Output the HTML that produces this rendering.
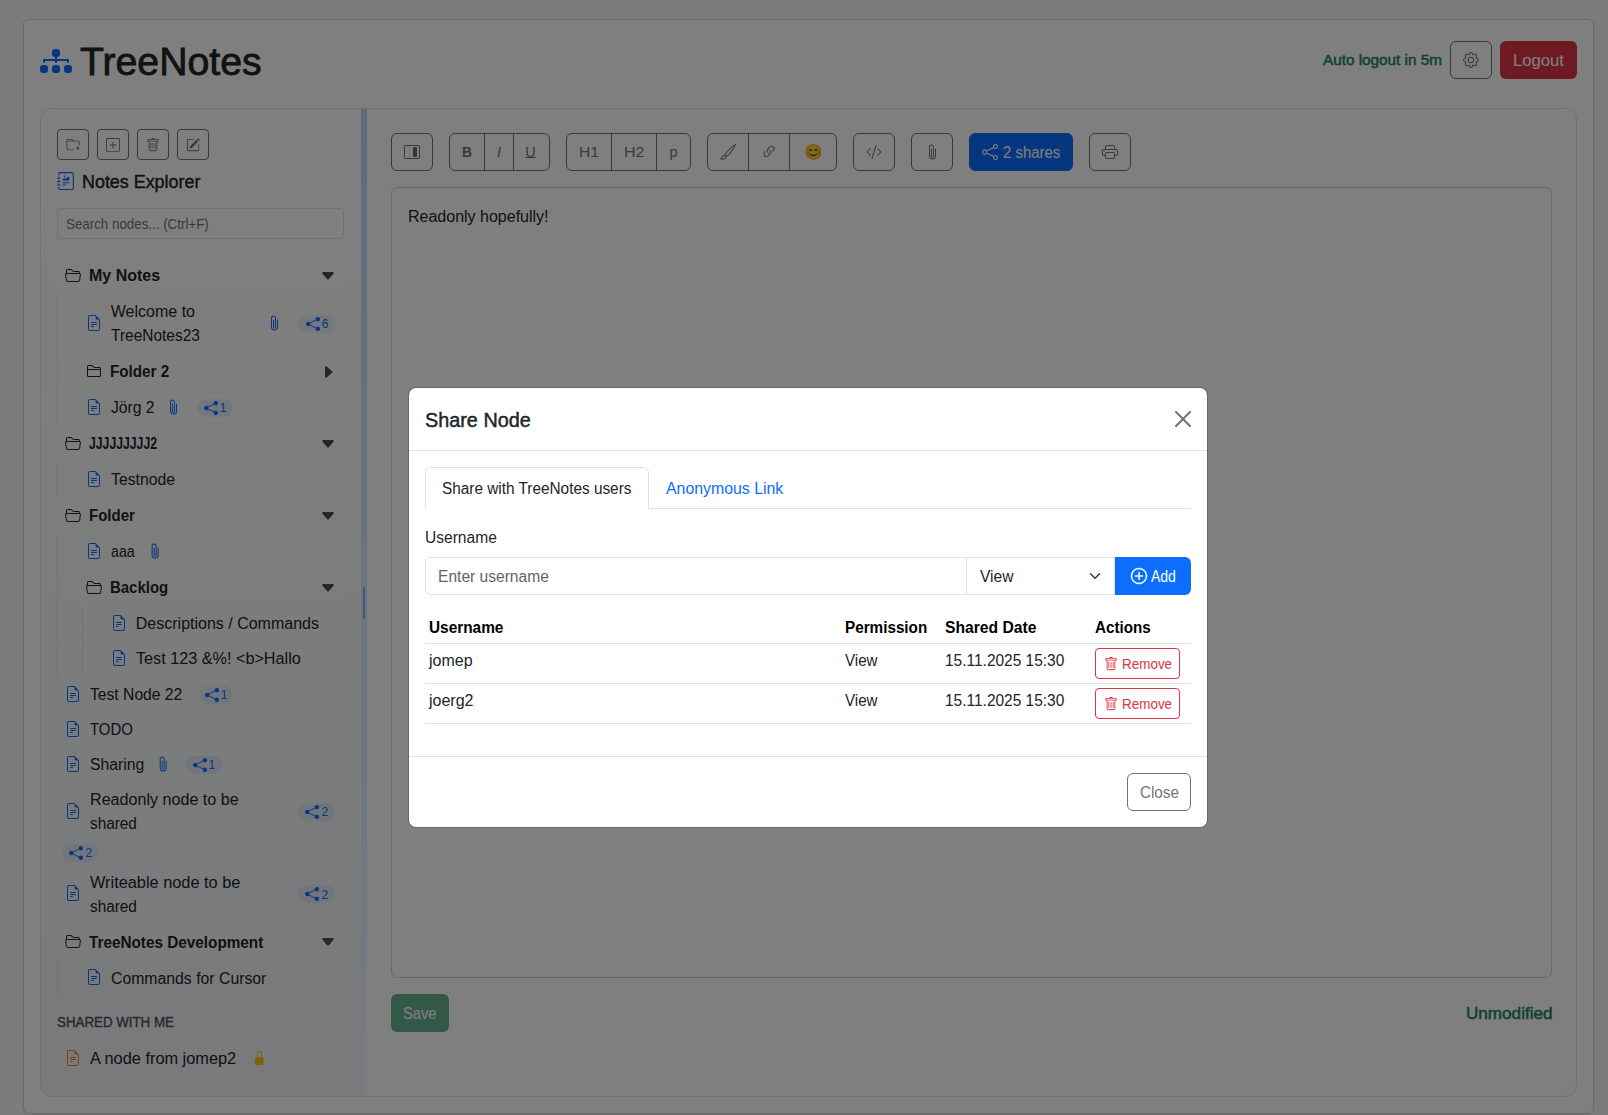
<!DOCTYPE html>
<html lang="en"><head><meta charset="utf-8"><title>TreeNotes</title>
<style>
*{box-sizing:border-box}
html,body{margin:0;padding:0}
body{width:1608px;height:1115px;overflow:hidden;background:#f8f9fa;font-family:"Liberation Sans",sans-serif;font-size:16px;line-height:1.5;color:#212529;position:relative}
span[id^=t]{position:relative;top:.0675em}
svg.bi{display:inline-block;vertical-align:-.125em;flex:none}
.app{position:absolute;left:23px;top:19px;width:1571px;height:1095px;background:#fff;border:1px solid #d3d4d5;border-radius:6px;box-shadow:0 1px 3px rgba(0,0,0,.08)}
.hdr{position:absolute;left:16px;top:16px;right:16px;height:48px}
.logo{position:absolute;left:0;top:9px;width:32px;height:32px;line-height:0}
.hdr h1{position:absolute;left:40px;top:-.5px;margin:0;font-size:39px;line-height:48px;font-weight:400;color:#212529;white-space:nowrap;-webkit-text-stroke:.8px #212529}
.auto{position:absolute;right:135px;top:11.3px;font-size:14px;line-height:24px;font-weight:400;color:#198754;white-space:nowrap;-webkit-text-stroke:.45px #198754}
.gear{position:absolute;left:1410px;top:5px;width:42px;height:38px;border:1px solid #6c757d;border-radius:6px;color:#6c757d;display:flex;align-items:center;justify-content:center}
.logout{position:absolute;left:1460px;top:5px;width:77px;height:38px;background:#dc3545;border-radius:6px;color:#fff;display:flex;align-items:center;justify-content:center;white-space:nowrap}
.card{position:absolute;left:16px;top:88px;width:1537px;height:989px;border:1px solid #dee2e6;border-radius:12px;overflow:hidden;background:#fff}
.side{position:absolute;left:0;top:0;width:320px;height:100%;background:linear-gradient(180deg,#fff 0%,#f2f4f6 100%);padding:20px 16px 0 16px}
.sbtns{display:flex;gap:8px;height:31px}
.sbtns span{width:32px;height:31px;border:1px solid #6c757d;border-radius:4px;color:#6c757d;display:flex;align-items:center;justify-content:center}
.ne{position:absolute;left:16px;top:59px;height:26px;display:flex;align-items:center;white-space:nowrap}
.ne h5{margin:0 0 0 7.3px;font-size:17.6px;font-weight:400;line-height:26px;color:#212529;-webkit-text-stroke:.4px #212529}
.search{position:absolute;left:16px;top:99px;width:287px;height:31px;border:1px solid #dee2e6;border-radius:4px;background:#fff;font-size:14px;line-height:29px;padding:0 8px 0 7.5px;color:#6c757d;white-space:nowrap}
.tree{position:absolute;left:16px;top:148px;width:287px}
.row{display:flex;align-items:center;min-height:35px;padding:5.5px 8px;position:relative;white-space:nowrap;color:#212529}
.row>svg.bi{position:relative;top:-1px}
.row .nm{margin-left:8.8px;line-height:24px;position:relative;top:-.5px}
.row.folder .nm{font-weight:700;margin-left:8px}
.row.folder{color:#212529;background:linear-gradient(180deg,rgba(255,255,255,0),rgba(255,255,255,.3) 35%,rgba(255,255,255,.3) 65%,rgba(255,255,255,0));min-height:37px;padding-top:6.5px;padding-bottom:6.5px}
.row.d1{padding-left:29px}
.row.d2{padding-left:54px}
.caret{position:absolute;right:8px;top:10.5px;line-height:0;color:#495057}
.kids{position:relative}
.kids:before{content:"";position:absolute;left:0;top:0;bottom:0;width:1px;background:#dee2e6}
.kids.k2:before{left:25px}
.kids.k2{margin-bottom:1px}
.clip{position:absolute;top:50%;margin-top:-8.5px;color:#0d6efd;line-height:0}
.sbadge{position:absolute;top:50%;margin-top:-9px;display:inline-flex;align-items:center;justify-content:center;height:18px;border-radius:9px;background:rgba(13,110,253,.08);color:#0d6efd;font-size:12px;line-height:18px}
.sbadge span{margin-left:2px}
.lonely{height:23.5px;position:relative}
.swm{font-size:14px;line-height:21px;font-weight:400;color:#495057;margin-top:16px;height:29.5px;white-space:nowrap;-webkit-text-stroke:.35px #495057}
.lock{position:absolute;top:50%;margin-top:-7.5px;line-height:0}
.split{position:absolute;left:320px;top:0;width:6px;height:100%;background:linear-gradient(180deg,rgba(13,110,253,.28),rgba(13,110,253,.05))}
.split i{position:absolute;left:2px;top:478px;width:2px;height:32px;background:rgba(13,110,253,.45);border-radius:1px}
.main{position:absolute;left:326px;top:0;right:0;height:100%}
.toolbar{position:absolute;left:24px;top:24px;height:38px;width:800px}
.grp{position:absolute;top:0;height:38px;border:1px solid #6c757d;border-radius:6px;display:flex;color:#6c757d;overflow:hidden}
.tbtn{flex:1 1 auto;display:flex;align-items:center;justify-content:center;border-left:1px solid #6c757d;height:100%;white-space:nowrap}
.tbtn:first-child{border-left:0}
.tbtn.w36{flex:0 0 34px}.tbtn.w29{flex:0 0 29px}
.tbtn.w46{flex:0 0 44px}.tbtn.w45{flex:0 0 45px}.tbtn.w34{flex:1}
.tbtn.w42{flex:0 0 40px}.tbtn.w41{flex:0 0 41px}.tbtn.w47{flex:1}
.tbtn.sm{font-size:14.5px}
.grp.prim{background:#0d6efd;border-color:#0d6efd;color:#fff}
.emo{font-size:15px;color:#fd7e14}
.editor{position:absolute;left:24px;top:78px;width:1161px;height:791px;border:1px solid #ced4da;border-radius:6px;padding:16px}
.editor p{margin:0;white-space:nowrap}
.save{position:absolute;left:24px;top:885px;width:58px;height:38px;background:#198754;border-radius:6px;color:#fff;display:flex;align-items:center;justify-content:center;opacity:.65}
.unmod{position:absolute;right:24px;top:892px;font-weight:400;color:#198754;white-space:nowrap;-webkit-text-stroke:.5px #198754}
.backdrop{position:absolute;left:0;top:0;width:1608px;height:1115px;background:rgba(0,0,0,.5)}
.modal{position:absolute;left:408px;top:387px;width:800px;height:441px;background:#fff;background-clip:padding-box;border:1px solid rgba(0,0,0,.175);border-radius:8px;color:#212529}
.mh{height:63px;border-bottom:1px solid #dee2e6;position:relative}
.mh h5{position:absolute;left:16px;top:16px;margin:0;font-size:20px;line-height:30px;font-weight:400;white-space:nowrap;-webkit-text-stroke:.45px #212529}
.close{position:absolute;right:16px;top:23px;width:16px;height:16px;line-height:0;opacity:.55}
.mb{padding:16px;position:relative;height:305px}
.tabs{height:42px;border-bottom:1px solid #dee2e6;display:flex;white-space:nowrap}
.tab{height:42px;padding:8px 16px;border:1px solid transparent;border-radius:6px 6px 0 0;color:#0d6efd;line-height:24px}
.tab.act{width:224px;color:#212529;border-color:#dee2e6 #dee2e6 #fff;background:#fff}
label{display:block;margin-top:16px;margin-bottom:8px;line-height:24px;white-space:nowrap}
.ig{display:flex;height:38px;white-space:nowrap}
.inp{flex:0 0 542px;border:1px solid #dee2e6;border-radius:6px 0 0 6px;padding:6px 12px;color:#5f6368;line-height:24px}
.sel{flex:0 0 148px;border:1px solid #dee2e6;border-left:0;padding:6px 12px 6px 12.7px;line-height:24px;position:relative}
.add{flex:0 0 76px;background:#0d6efd;color:#fff;border-radius:0 6px 6px 0;display:flex;align-items:center;justify-content:center}
table{border-collapse:separate;border-spacing:0;margin-top:16px;width:766px;table-layout:fixed}
th,td{padding:4px;text-align:left;vertical-align:top;border-bottom:1px solid #dee2e6;line-height:24px;white-space:nowrap}
th{font-weight:700;color:#000}
td{height:40px}
th{height:33px}
.rm{display:inline-flex;align-items:center;height:31px;width:84.5px;padding:0 8px;border:1px solid #dc3545;border-radius:4px;color:#dc3545;font-size:14px}
.mf{position:absolute;left:0;bottom:0;width:100%;height:71px;border-top:1px solid #dee2e6}
.closeb{position:absolute;right:16px;top:16px;width:64px;height:38px;border:1px solid #6c757d;border-radius:6px;color:#6c757d;display:flex;align-items:center;justify-content:center}

</style></head><body>
<div class="app">
  <div class="hdr">
    <span class="logo"><svg class="bi" width="32" height="32" viewBox="0 0 16 16" fill="#0d6efd" style="overflow:visible;"><path fill-rule="evenodd" d="M6 3.5A1.5 1.5 0 0 1 7.5 2h1A1.5 1.5 0 0 1 10 3.5v1A1.5 1.5 0 0 1 8.5 6v1H14a.5.5 0 0 1 .5.5v1a.5.5 0 0 1-1 0V8h-5v.5a.5.5 0 0 1-1 0V8h-5v.5a.5.5 0 0 1-1 0v-1A.5.5 0 0 1 2 7h5.5V6A1.5 1.5 0 0 1 6 4.5zm-6 8A1.5 1.5 0 0 1 1.5 10h1A1.5 1.5 0 0 1 4 11.5v1A1.5 1.5 0 0 1 2.5 14h-1A1.5 1.5 0 0 1 0 12.5zm6 0A1.5 1.5 0 0 1 7.5 10h1a1.5 1.5 0 0 1 1.5 1.5v1A1.5 1.5 0 0 1 8.5 14h-1A1.5 1.5 0 0 1 6 12.5zm6 0a1.5 1.5 0 0 1 1.5-1.5h1a1.5 1.5 0 0 1 1.5 1.5v1a1.5 1.5 0 0 1-1.5 1.5h-1a1.5 1.5 0 0 1-1.5-1.5z"/></svg></span><h1><span id="t38" style="display:inline-block;transform:scaleX(1.0056);transform-origin:0 50%;margin-right:1.00px;">TreeNotes</span></h1>
    <span class="auto"><span id="t39" style="display:inline-block;transform:scaleX(1.0917);transform-origin:0 50%;margin-right:10.00px;">Auto logout in 5m</span></span>
    <span class="gear"><svg class="bi" width="16" height="16" viewBox="0 0 16 16" fill="currentColor" style="overflow:visible;"><path d="M8 4.754a3.246 3.246 0 1 0 0 6.492 3.246 3.246 0 0 0 0-6.492M5.754 8a2.246 2.246 0 1 1 4.492 0 2.246 2.246 0 0 1-4.492 0"/><path d="M9.796 1.343c-.527-1.790-3.065-1.790-3.592 0l-.094.319a.873.873 0 0 1-1.255.520l-.292-.160c-1.640-.892-3.433.902-2.540 2.541l.159.292a.873.873 0 0 1-.520 1.255l-.319.094c-1.790.527-1.790 3.065 0 3.592l.319.094a.873.873 0 0 1 .520 1.255l-.160.292c-.892 1.640.901 3.434 2.541 2.540l.292-.159a.873.873 0 0 1 1.255.520l.094.319c.527 1.790 3.065 1.790 3.592 0l.094-.319a.873.873 0 0 1 1.255-.520l.292.160c1.640.893 3.434-.902 2.540-2.541l-.159-.292a.873.873 0 0 1 .520-1.255l.319-.094c1.790-.527 1.790-3.065 0-3.592l-.319-.094a.873.873 0 0 1-.520-1.255l.160-.292c.893-1.640-.902-3.433-2.541-2.540l-.292.159a.873.873 0 0 1-1.255-.520zm-2.633.283c.246-.835 1.428-.835 1.674 0l.094.319a1.873 1.873 0 0 0 2.693 1.115l.291-.160c.764-.415 1.600.420 1.184 1.185l-.159.292a1.873 1.873 0 0 0 1.116 2.692l.318.094c.835.246.835 1.428 0 1.674l-.319.094a1.873 1.873 0 0 0-1.115 2.693l.160.291c.415.764-.420 1.600-1.185 1.184l-.291-.159a1.873 1.873 0 0 0-2.693 1.116l-.094.318c-.246.835-1.428.835-1.674 0l-.094-.319a1.873 1.873 0 0 0-2.692-1.115l-.292.160c-.764.415-1.600-.420-1.184-1.185l.159-.291A1.873 1.873 0 0 0 1.945 8.930l-.319-.094c-.835-.246-.835-1.428 0-1.674l.319-.094A1.873 1.873 0 0 0 3.060 4.377l-.160-.292c-.415-.764.420-1.600 1.185-1.184l.292.159a1.873 1.873 0 0 0 2.692-1.115z"/></svg></span>
    <span class="logout"><span id="t40" style="display:inline-block;transform:scaleX(1.0417);transform-origin:0 50%;margin-right:2.04px;">Logout</span></span>
  </div>
  <div class="card">
    <div class="side">
      <div class="sbtns"><span><svg class="bi" width="14" height="14" viewBox="0 0 16 16" fill="currentColor" style="overflow:visible;"><path d="m.5 3 .04.87a2 2 0 0 0-.342 1.311l.637 7A2 2 0 0 0 2.826 14H9v-1H2.826a1 1 0 0 1-.995-.91l-.637-7A1 1 0 0 1 2.19 4h11.62a1 1 0 0 1 .996 1.09L14.54 8h1.005l.256-2.819A2 2 0 0 0 13.81 3H9.828a2 2 0 0 1-1.414-.586l-.828-.828A2 2 0 0 0 6.172 1H2.5a2 2 0 0 0-2 2m5.672-1a1 1 0 0 1 .707.293L7.586 3H2.19q-.362.002-.683.12L1.5 2.98a1 1 0 0 1 1-.98z"/><path d="M13.5 9a.5.5 0 0 1 .5.5V11h1.5a.5.5 0 1 1 0 1H14v1.5a.5.5 0 1 1-1 0V12h-1.5a.5.5 0 0 1 0-1H13V9.5a.5.5 0 0 1 .5-.5"/></svg></span><span><svg class="bi" width="14" height="14" viewBox="0 0 16 16" fill="currentColor" style="overflow:visible;"><path d="M14 1a1 1 0 0 1 1 1v12a1 1 0 0 1-1 1H2a1 1 0 0 1-1-1V2a1 1 0 0 1 1-1zM2 0a2 2 0 0 0-2 2v12a2 2 0 0 0 2 2h12a2 2 0 0 0 2-2V2a2 2 0 0 0-2-2z"/><path d="M8 4a.5.5 0 0 1 .5.5v3h3a.5.5 0 0 1 0 1h-3v3a.5.5 0 0 1-1 0v-3h-3a.5.5 0 0 1 0-1h3v-3A.5.5 0 0 1 8 4"/></svg></span><span><svg class="bi" width="14" height="14" viewBox="0 0 16 16" fill="currentColor" style="overflow:visible;"><path d="M5.5 5.5A.5.5 0 0 1 6 6v6a.5.5 0 0 1-1 0V6a.5.5 0 0 1 .5-.5m2.5 0a.5.5 0 0 1 .5.5v6a.5.5 0 0 1-1 0V6a.5.5 0 0 1 .5-.5m3 .5a.5.5 0 0 0-1 0v6a.5.5 0 0 0 1 0z"/><path d="M14.5 3a1 1 0 0 1-1 1H13v9a2 2 0 0 1-2 2H5a2 2 0 0 1-2-2V4h-.5a1 1 0 0 1-1-1V2a1 1 0 0 1 1-1H6a1 1 0 0 1 1-1h2a1 1 0 0 1 1 1h3.5a1 1 0 0 1 1 1zM4.118 4 4 4.059V13a1 1 0 0 0 1 1h6a1 1 0 0 0 1-1V4.059L11.882 4zM2.5 3h11V2h-11z"/></svg></span><span><svg class="bi" width="14" height="14" viewBox="0 0 16 16" fill="currentColor" style="overflow:visible;"><path d="M15.502 1.94a.5.5 0 0 1 0 .706L14.459 3.69l-2-2L13.502.646a.5.5 0 0 1 .707 0l1.293 1.293zm-1.75 2.456-2-2L4.939 9.21a.5.5 0 0 0-.121.196l-.805 2.414a.25.25 0 0 0 .316.316l2.414-.805a.5.5 0 0 0 .196-.12l6.813-6.814z"/><path fill-rule="evenodd" d="M1 13.5A1.5 1.5 0 0 0 2.5 15h11a1.5 1.5 0 0 0 1.5-1.5v-6a.5.5 0 0 0-1 0v6a.5.5 0 0 1-.5.5h-11a.5.5 0 0 1-.5-.5v-11a.5.5 0 0 1 .5-.5H9a.5.5 0 0 0 0-1H2.5A1.5 1.5 0 0 0 1 2.5z"/></svg></span></div>
      <div class="ne"><svg class="bi" width="18" height="18" viewBox="0 0 16 16" fill="#0d6efd" style="overflow:visible;"><path d="M7.5 3.75a.75.75 0 1 1-1.5 0 .75.75 0 0 1 1.500 0m-.861 1.542 1.33.886 1.854-1.855a.25.25 0 0 1 .289-.047L11 4.75V7a.5.5 0 0 1-.5.5h-5A.5.5 0 0 1 5 7v-.5s1.54-1.274 1.639-1.208M5 9.5a.5.5 0 0 1 .5-.5h5a.5.5 0 0 1 0 1h-5a.5.5 0 0 1-.5-.5m0 2a.5.5 0 0 1 .5-.5h2a.5.5 0 0 1 0 1h-2a.5.5 0 0 1-.5-.5"/><path d="M3 0h10a2 2 0 0 1 2 2v12a2 2 0 0 1-2 2H3a2 2 0 0 1-2-2v-1h1v1a1 1 0 0 0 1 1h10a1 1 0 0 0 1-1V2a1 1 0 0 0-1-1H3a1 1 0 0 0-1 1v1H1V2a2 2 0 0 1 2-2"/><path d="M1 5v-.5a.5.5 0 0 1 1 0V5h.5a.5.5 0 0 1 0 1h-2a.5.5 0 0 1 0-1zm0 3v-.5a.5.5 0 0 1 1 0V8h.5a.5.5 0 0 1 0 1h-2a.5.5 0 0 1 0-1zm0 3v-.5a.5.5 0 0 1 1 0v.5h.5a.5.5 0 0 1 0 1h-2a.5.5 0 0 1 0-1z"/></svg><h5><span id="t41" style="display:inline-block;transform:scaleX(1.0172);transform-origin:0 50%;margin-right:2.01px;">Notes Explorer</span></h5></div>
      <div class="search"><span id="t42" style="display:inline-block;transform:scaleX(0.9530);transform-origin:0 50%;margin-right:-7.04px;">Search nodes... (Ctrl+F)</span></div>
      <div class="tree">
<div class="row folder d0"><svg class="bi" width="16" height="16" viewBox="0 0 16 16" fill="currentColor" style="overflow:visible;"><path d="M1 3.5A1.5 1.5 0 0 1 2.5 2h2.764c.958 0 1.76.56 2.311 1.184C7.985 3.648 8.48 4 9 4h4.5A1.5 1.5 0 0 1 15 5.5v.64c.57.265.94.876.856 1.546l-.64 5.124A2.5 2.5 0 0 1 12.733 15H3.266a2.5 2.5 0 0 1-2.481-2.19l-.64-5.124A1.5 1.5 0 0 1 1 6.14zM2 6h12v-.5a.5.5 0 0 0-.5-.5H9c-.964 0-1.71-.629-2.174-1.154C6.374 3.334 5.82 3 5.264 3H2.5a.5.5 0 0 0-.5.5zm-.367 1a.5.5 0 0 0-.496.562l.64 5.124A1.5 1.5 0 0 0 3.266 14h9.468a1.5 1.5 0 0 0 1.489-1.314l.64-5.124A.5.5 0 0 0 14.367 7z"/></svg><span class="nm"><span id="t1">My Notes</span></span><span class="caret"><svg class="bi" width="16" height="16" viewBox="0 0 16 16" fill="currentColor" style="overflow:visible;"><path d="M7.247 11.140 2.451 5.658C1.885 5.013 2.345 4 3.204 4h9.592a1 1 0 0 1 .753 1.659l-4.796 5.480a1 1 0 0 1-1.506 0z"/></svg></span></div>
<div class="kids">
<div class="row note d1 two"><svg class="bi" width="16" height="16" viewBox="0 0 16 16" fill="#0d6efd" style="overflow:visible;"><path d="M5.5 7a.5.5 0 0 0 0 1h5a.5.5 0 0 0 0-1zM5 9.500a.5.5 0 0 1 .5-.5h5a.5.5 0 0 1 0 1h-5a.5.5 0 0 1-.5-.5m0 2a.5.5 0 0 1 .5-.5h2a.5.5 0 0 1 0 1h-2a.5.5 0 0 1-.5-.5"/><path d="M9.500 0H4a2 2 0 0 0-2 2v12a2 2 0 0 0 2 2h8a2 2 0 0 0 2-2V4.500zm0 1v2A1.500 1.500 0 0 0 11 4.500h2V14a1 1 0 0 1-1 1H4a1 1 0 0 1-1-1V2a1 1 0 0 1 1-1z"/></svg><span class="nm"><span id="t2">Welcome to</span><br><span id="t3" style="display:inline-block;transform:scaleX(0.9670);transform-origin:0 50%;margin-right:-3.03px;">TreeNotes23</span></span><span class="clip" style="left:209.00px"><svg class="bi" width="16" height="16" viewBox="0 0 16 16" fill="currentColor" style="overflow:visible;"><g transform="translate(0.500 0.000)"><path d="M4.500 3a2.500 2.500 0 0 1 5 0v9a1.500 1.500 0 0 1-3 0V5a.5.5 0 0 1 1 0v7a.5.5 0 0 0 1 0V3a1.500 1.500 0 1 0-3 0v9a2.500 2.500 0 0 0 5 0V5a.5.5 0 0 1 1 0v7a3.500 3.500 0 1 1-7 0z"/></g></svg></span><span class="sbadge" style="left:241.30px;width:37.50px;"><svg class="bi" width="14" height="14" viewBox="0 0 16 16" fill="currentColor" style="overflow:visible;"><path d="M11 2.500a2.500 2.500 0 1 1 .603 1.628l-6.718 3.120a2.500 2.500 0 0 1 0 1.504l6.718 3.120a2.500 2.500 0 1 1-.488.876l-6.718-3.120a2.500 2.500 0 1 1 0-3.256l6.718-3.120A2.500 2.500 0 0 1 11 2.500"/></svg><span id="t4">6</span></span></div>
<div class="row folder d1"><svg class="bi" width="16" height="16" viewBox="0 0 16 16" fill="currentColor" style="overflow:visible;"><path d="M1 3.5A1.5 1.5 0 0 1 2.5 2h2.764c.958 0 1.76.56 2.311 1.184C7.985 3.648 8.48 4 9 4h4.5A1.5 1.5 0 0 1 15 5.5v7a1.5 1.5 0 0 1-1.5 1.5h-11A1.5 1.5 0 0 1 1 12.5zM2.5 3a.5.5 0 0 0-.5.5V6h12v-.5a.5.5 0 0 0-.5-.5H9c-.964 0-1.71-.629-2.174-1.154C6.374 3.334 5.82 3 5.264 3zM14 7H2v5.500a.5.5 0 0 0 .5.5h11a.5.5 0 0 0 .5-.5z"/></svg><span class="nm"><span id="t5" style="display:inline-block;transform:scaleX(0.9508);transform-origin:0 50%;margin-right:-3.06px;">Folder 2</span></span><span class="caret"><svg class="bi" width="16" height="16" viewBox="0 0 16 16" fill="currentColor" style="overflow:visible;"><path d="m12.140 8.753-5.482 4.796c-.646.566-1.658.106-1.658-.753V3.204a1 1 0 0 1 1.659-.753l5.480 4.796a1 1 0 0 1 0 1.506z"/></svg></span></div>
<div class="row note d1 "><svg class="bi" width="16" height="16" viewBox="0 0 16 16" fill="#0d6efd" style="overflow:visible;"><path d="M5.5 7a.5.5 0 0 0 0 1h5a.5.5 0 0 0 0-1zM5 9.500a.5.5 0 0 1 .5-.5h5a.5.5 0 0 1 0 1h-5a.5.5 0 0 1-.5-.5m0 2a.5.5 0 0 1 .5-.5h2a.5.5 0 0 1 0 1h-2a.5.5 0 0 1-.5-.5"/><path d="M9.500 0H4a2 2 0 0 0-2 2v12a2 2 0 0 0 2 2h8a2 2 0 0 0 2-2V4.500zm0 1v2A1.500 1.500 0 0 0 11 4.500h2V14a1 1 0 0 1-1 1H4a1 1 0 0 1-1-1V2a1 1 0 0 1 1-1z"/></svg><span class="nm"><span id="t6" style="display:inline-block;transform:scaleX(0.9773);transform-origin:0 50%;margin-right:-1.01px;">Jörg 2</span></span><span class="clip" style="left:108.00px"><svg class="bi" width="16" height="16" viewBox="0 0 16 16" fill="currentColor" style="overflow:visible;"><g transform="translate(0.500 0.000)"><path d="M4.500 3a2.500 2.500 0 0 1 5 0v9a1.500 1.500 0 0 1-3 0V5a.5.5 0 0 1 1 0v7a.5.5 0 0 0 1 0V3a1.500 1.500 0 1 0-3 0v9a2.500 2.500 0 0 0 5 0V5a.5.5 0 0 1 1 0v7a3.500 3.500 0 1 1-7 0z"/></g></svg></span><span class="sbadge" style="left:140.20px;width:35.60px;"><svg class="bi" width="14" height="14" viewBox="0 0 16 16" fill="currentColor" style="overflow:visible;"><path d="M11 2.500a2.500 2.500 0 1 1 .603 1.628l-6.718 3.120a2.500 2.500 0 0 1 0 1.504l6.718 3.120a2.500 2.500 0 1 1-.488.876l-6.718-3.120a2.500 2.500 0 1 1 0-3.256l6.718-3.120A2.500 2.500 0 0 1 11 2.500"/></svg><span id="t7">1</span></span></div>
</div>
<div class="row folder d0"><svg class="bi" width="16" height="16" viewBox="0 0 16 16" fill="currentColor" style="overflow:visible;"><path d="M1 3.5A1.5 1.5 0 0 1 2.5 2h2.764c.958 0 1.76.56 2.311 1.184C7.985 3.648 8.48 4 9 4h4.5A1.5 1.5 0 0 1 15 5.5v.64c.57.265.94.876.856 1.546l-.64 5.124A2.5 2.5 0 0 1 12.733 15H3.266a2.5 2.5 0 0 1-2.481-2.19l-.64-5.124A1.5 1.5 0 0 1 1 6.14zM2 6h12v-.5a.5.5 0 0 0-.5-.5H9c-.964 0-1.71-.629-2.174-1.154C6.374 3.334 5.82 3 5.264 3H2.5a.5.5 0 0 0-.5.5zm-.367 1a.5.5 0 0 0-.496.562l.64 5.124A1.5 1.5 0 0 0 3.266 14h9.468a1.5 1.5 0 0 0 1.489-1.314l.64-5.124A.5.5 0 0 0 14.367 7z"/></svg><span class="nm"><span id="t8" style="display:inline-block;transform:scaleX(0.7640);transform-origin:0 50%;margin-right:-21.00px;">JJJJJJJJJ2</span></span><span class="caret"><svg class="bi" width="16" height="16" viewBox="0 0 16 16" fill="currentColor" style="overflow:visible;"><path d="M7.247 11.140 2.451 5.658C1.885 5.013 2.345 4 3.204 4h9.592a1 1 0 0 1 .753 1.659l-4.796 5.480a1 1 0 0 1-1.506 0z"/></svg></span></div>
<div class="kids">
<div class="row note d1 "><svg class="bi" width="16" height="16" viewBox="0 0 16 16" fill="#0d6efd" style="overflow:visible;"><path d="M5.5 7a.5.5 0 0 0 0 1h5a.5.5 0 0 0 0-1zM5 9.500a.5.5 0 0 1 .5-.5h5a.5.5 0 0 1 0 1h-5a.5.5 0 0 1-.5-.5m0 2a.5.5 0 0 1 .5-.5h2a.5.5 0 0 1 0 1h-2a.5.5 0 0 1-.5-.5"/><path d="M9.500 0H4a2 2 0 0 0-2 2v12a2 2 0 0 0 2 2h8a2 2 0 0 0 2-2V4.500zm0 1v2A1.500 1.500 0 0 0 11 4.500h2V14a1 1 0 0 1-1 1H4a1 1 0 0 1-1-1V2a1 1 0 0 1 1-1z"/></svg><span class="nm"><span id="t9" style="display:inline-block;transform:scaleX(0.9844);transform-origin:0 50%;margin-right:-1.01px;">Testnode</span></span></div>
</div>
<div class="row folder d0"><svg class="bi" width="16" height="16" viewBox="0 0 16 16" fill="currentColor" style="overflow:visible;"><path d="M1 3.5A1.5 1.5 0 0 1 2.5 2h2.764c.958 0 1.76.56 2.311 1.184C7.985 3.648 8.48 4 9 4h4.5A1.5 1.5 0 0 1 15 5.5v.64c.57.265.94.876.856 1.546l-.64 5.124A2.5 2.5 0 0 1 12.733 15H3.266a2.5 2.5 0 0 1-2.481-2.19l-.64-5.124A1.5 1.5 0 0 1 1 6.14zM2 6h12v-.5a.5.5 0 0 0-.5-.5H9c-.964 0-1.71-.629-2.174-1.154C6.374 3.334 5.82 3 5.264 3H2.5a.5.5 0 0 0-.5.5zm-.367 1a.5.5 0 0 0-.496.562l.64 5.124A1.5 1.5 0 0 0 3.266 14h9.468a1.5 1.5 0 0 0 1.489-1.314l.64-5.124A.5.5 0 0 0 14.367 7z"/></svg><span class="nm"><span id="t10" style="display:inline-block;transform:scaleX(0.9375);transform-origin:0 50%;margin-right:-3.06px;">Folder</span></span><span class="caret"><svg class="bi" width="16" height="16" viewBox="0 0 16 16" fill="currentColor" style="overflow:visible;"><path d="M7.247 11.140 2.451 5.658C1.885 5.013 2.345 4 3.204 4h9.592a1 1 0 0 1 .753 1.659l-4.796 5.480a1 1 0 0 1-1.506 0z"/></svg></span></div>
<div class="kids">
<div class="row note d1 "><svg class="bi" width="16" height="16" viewBox="0 0 16 16" fill="#0d6efd" style="overflow:visible;"><path d="M5.5 7a.5.5 0 0 0 0 1h5a.5.5 0 0 0 0-1zM5 9.500a.5.5 0 0 1 .5-.5h5a.5.5 0 0 1 0 1h-5a.5.5 0 0 1-.5-.5m0 2a.5.5 0 0 1 .5-.5h2a.5.5 0 0 1 0 1h-2a.5.5 0 0 1-.5-.5"/><path d="M9.500 0H4a2 2 0 0 0-2 2v12a2 2 0 0 0 2 2h8a2 2 0 0 0 2-2V4.500zm0 1v2A1.500 1.500 0 0 0 11 4.500h2V14a1 1 0 0 1-1 1H4a1 1 0 0 1-1-1V2a1 1 0 0 1 1-1z"/></svg><span class="nm"><span id="t11" style="display:inline-block;transform:scaleX(0.8889);transform-origin:0 50%;margin-right:-2.97px;">aaa</span></span><span class="clip" style="left:90.00px"><svg class="bi" width="16" height="16" viewBox="0 0 16 16" fill="currentColor" style="overflow:visible;"><g transform="translate(0.100 0.000)"><path d="M4.500 3a2.500 2.500 0 0 1 5 0v9a1.500 1.500 0 0 1-3 0V5a.5.5 0 0 1 1 0v7a.5.5 0 0 0 1 0V3a1.500 1.500 0 1 0-3 0v9a2.500 2.500 0 0 0 5 0V5a.5.5 0 0 1 1 0v7a3.500 3.500 0 1 1-7 0z"/></g></svg></span></div>
<div class="row folder d1"><svg class="bi" width="16" height="16" viewBox="0 0 16 16" fill="currentColor" style="overflow:visible;"><path d="M1 3.5A1.5 1.5 0 0 1 2.5 2h2.764c.958 0 1.76.56 2.311 1.184C7.985 3.648 8.48 4 9 4h4.5A1.5 1.5 0 0 1 15 5.5v.64c.57.265.94.876.856 1.546l-.64 5.124A2.5 2.5 0 0 1 12.733 15H3.266a2.5 2.5 0 0 1-2.481-2.19l-.64-5.124A1.5 1.5 0 0 1 1 6.14zM2 6h12v-.5a.5.5 0 0 0-.5-.5H9c-.964 0-1.71-.629-2.174-1.154C6.374 3.334 5.82 3 5.264 3H2.5a.5.5 0 0 0-.5.5zm-.367 1a.5.5 0 0 0-.496.562l.64 5.124A1.5 1.5 0 0 0 3.266 14h9.468a1.5 1.5 0 0 0 1.489-1.314l.64-5.124A.5.5 0 0 0 14.367 7z"/></svg><span class="nm"><span id="t12" style="display:inline-block;transform:scaleX(0.9344);transform-origin:0 50%;margin-right:-4.08px;">Backlog</span></span><span class="caret"><svg class="bi" width="16" height="16" viewBox="0 0 16 16" fill="currentColor" style="overflow:visible;"><path d="M7.247 11.140 2.451 5.658C1.885 5.013 2.345 4 3.204 4h9.592a1 1 0 0 1 .753 1.659l-4.796 5.480a1 1 0 0 1-1.506 0z"/></svg></span></div>
<div class="kids k2">
<div class="row note d2 "><svg class="bi" width="16" height="16" viewBox="0 0 16 16" fill="#0d6efd" style="overflow:visible;"><path d="M5.5 7a.5.5 0 0 0 0 1h5a.5.5 0 0 0 0-1zM5 9.500a.5.5 0 0 1 .5-.5h5a.5.5 0 0 1 0 1h-5a.5.5 0 0 1-.5-.5m0 2a.5.5 0 0 1 .5-.5h2a.5.5 0 0 1 0 1h-2a.5.5 0 0 1-.5-.5"/><path d="M9.500 0H4a2 2 0 0 0-2 2v12a2 2 0 0 0 2 2h8a2 2 0 0 0 2-2V4.500zm0 1v2A1.500 1.500 0 0 0 11 4.500h2V14a1 1 0 0 1-1 1H4a1 1 0 0 1-1-1V2a1 1 0 0 1 1-1z"/></svg><span class="nm"><span id="t13">Descriptions / Commands</span></span></div>
<div class="row note d2 "><svg class="bi" width="16" height="16" viewBox="0 0 16 16" fill="#0d6efd" style="overflow:visible;"><path d="M5.5 7a.5.5 0 0 0 0 1h5a.5.5 0 0 0 0-1zM5 9.500a.5.5 0 0 1 .5-.5h5a.5.5 0 0 1 0 1h-5a.5.5 0 0 1-.5-.5m0 2a.5.5 0 0 1 .5-.5h2a.5.5 0 0 1 0 1h-2a.5.5 0 0 1-.5-.5"/><path d="M9.500 0H4a2 2 0 0 0-2 2v12a2 2 0 0 0 2 2h8a2 2 0 0 0 2-2V4.500zm0 1v2A1.500 1.500 0 0 0 11 4.500h2V14a1 1 0 0 1-1 1H4a1 1 0 0 1-1-1V2a1 1 0 0 1 1-1z"/></svg><span class="nm"><span id="t14" style="display:inline-block;transform:scaleX(1.0123);transform-origin:0 50%;margin-right:2.01px;">Test 123 &amp;%! &lt;b&gt;Hallo</span></span></div>
</div>
</div>
<div class="row note d0 "><svg class="bi" width="16" height="16" viewBox="0 0 16 16" fill="#0d6efd" style="overflow:visible;"><path d="M5.5 7a.5.5 0 0 0 0 1h5a.5.5 0 0 0 0-1zM5 9.500a.5.5 0 0 1 .5-.5h5a.5.5 0 0 1 0 1h-5a.5.5 0 0 1-.5-.5m0 2a.5.5 0 0 1 .5-.5h2a.5.5 0 0 1 0 1h-2a.5.5 0 0 1-.5-.5"/><path d="M9.500 0H4a2 2 0 0 0-2 2v12a2 2 0 0 0 2 2h8a2 2 0 0 0 2-2V4.500zm0 1v2A1.500 1.500 0 0 0 11 4.500h2V14a1 1 0 0 1-1 1H4a1 1 0 0 1-1-1V2a1 1 0 0 1 1-1z"/></svg><span class="nm"><span id="t15" style="display:inline-block;transform:scaleX(0.9787);transform-origin:0 50%;margin-right:-2.01px;">Test Node 22</span></span><span class="sbadge" style="left:141.60px;width:34.90px;"><svg class="bi" width="14" height="14" viewBox="0 0 16 16" fill="currentColor" style="overflow:visible;"><path d="M11 2.500a2.500 2.500 0 1 1 .603 1.628l-6.718 3.120a2.500 2.500 0 0 1 0 1.504l6.718 3.120a2.500 2.500 0 1 1-.488.876l-6.718-3.120a2.500 2.500 0 1 1 0-3.256l6.718-3.120A2.500 2.500 0 0 1 11 2.500"/></svg><span id="t16">1</span></span></div>
<div class="row note d0 "><svg class="bi" width="16" height="16" viewBox="0 0 16 16" fill="#0d6efd" style="overflow:visible;"><path d="M5.5 7a.5.5 0 0 0 0 1h5a.5.5 0 0 0 0-1zM5 9.500a.5.5 0 0 1 .5-.5h5a.5.5 0 0 1 0 1h-5a.5.5 0 0 1-.5-.5m0 2a.5.5 0 0 1 .5-.5h2a.5.5 0 0 1 0 1h-2a.5.5 0 0 1-.5-.5"/><path d="M9.500 0H4a2 2 0 0 0-2 2v12a2 2 0 0 0 2 2h8a2 2 0 0 0 2-2V4.500zm0 1v2A1.500 1.500 0 0 0 11 4.500h2V14a1 1 0 0 1-1 1H4a1 1 0 0 1-1-1V2a1 1 0 0 1 1-1z"/></svg><span class="nm"><span id="t17" style="display:inline-block;transform:scaleX(0.9333);transform-origin:0 50%;margin-right:-3.06px;">TODO</span></span></div>
<div class="row note d0 "><svg class="bi" width="16" height="16" viewBox="0 0 16 16" fill="#0d6efd" style="overflow:visible;"><path d="M5.5 7a.5.5 0 0 0 0 1h5a.5.5 0 0 0 0-1zM5 9.500a.5.5 0 0 1 .5-.5h5a.5.5 0 0 1 0 1h-5a.5.5 0 0 1-.5-.5m0 2a.5.5 0 0 1 .5-.5h2a.5.5 0 0 1 0 1h-2a.5.5 0 0 1-.5-.5"/><path d="M9.500 0H4a2 2 0 0 0-2 2v12a2 2 0 0 0 2 2h8a2 2 0 0 0 2-2V4.500zm0 1v2A1.500 1.500 0 0 0 11 4.500h2V14a1 1 0 0 1-1 1H4a1 1 0 0 1-1-1V2a1 1 0 0 1 1-1z"/></svg><span class="nm"><span id="t18" style="display:inline-block;transform:scaleX(0.9815);transform-origin:0 50%;margin-right:-1.02px;">Sharing</span></span><span class="clip" style="left:98.00px"><svg class="bi" width="16" height="16" viewBox="0 0 16 16" fill="currentColor" style="overflow:visible;"><g transform="translate(0.200 0.000)"><path d="M4.500 3a2.500 2.500 0 0 1 5 0v9a1.500 1.500 0 0 1-3 0V5a.5.5 0 0 1 1 0v7a.5.5 0 0 0 1 0V3a1.500 1.500 0 1 0-3 0v9a2.500 2.500 0 0 0 5 0V5a.5.5 0 0 1 1 0v7a3.500 3.500 0 1 1-7 0z"/></g></svg></span><span class="sbadge" style="left:129.20px;width:35.50px;"><svg class="bi" width="14" height="14" viewBox="0 0 16 16" fill="currentColor" style="overflow:visible;"><path d="M11 2.500a2.500 2.500 0 1 1 .603 1.628l-6.718 3.120a2.500 2.500 0 0 1 0 1.504l6.718 3.120a2.500 2.500 0 1 1-.488.876l-6.718-3.120a2.500 2.500 0 1 1 0-3.256l6.718-3.120A2.500 2.500 0 0 1 11 2.500"/></svg><span id="t19">1</span></span></div>
<div class="row note d0 two"><svg class="bi" width="16" height="16" viewBox="0 0 16 16" fill="#0d6efd" style="overflow:visible;"><path d="M5.5 7a.5.5 0 0 0 0 1h5a.5.5 0 0 0 0-1zM5 9.500a.5.5 0 0 1 .5-.5h5a.5.5 0 0 1 0 1h-5a.5.5 0 0 1-.5-.5m0 2a.5.5 0 0 1 .5-.5h2a.5.5 0 0 1 0 1h-2a.5.5 0 0 1-.5-.5"/><path d="M9.500 0H4a2 2 0 0 0-2 2v12a2 2 0 0 0 2 2h8a2 2 0 0 0 2-2V4.500zm0 1v2A1.500 1.500 0 0 0 11 4.500h2V14a1 1 0 0 1-1 1H4a1 1 0 0 1-1-1V2a1 1 0 0 1 1-1z"/></svg><span class="nm"><span id="t20" style="display:inline-block;transform:scaleX(1.0068);transform-origin:0 50%;margin-right:1.01px;">Readonly node to be</span><br><span id="t21" style="display:inline-block;transform:scaleX(0.9583);transform-origin:0 50%;margin-right:-2.04px;">shared</span></span><span class="sbadge" style="left:241.10px;width:37.40px;"><svg class="bi" width="14" height="14" viewBox="0 0 16 16" fill="currentColor" style="overflow:visible;"><path d="M11 2.500a2.500 2.500 0 1 1 .603 1.628l-6.718 3.120a2.500 2.500 0 0 1 0 1.504l6.718 3.120a2.500 2.500 0 1 1-.488.876l-6.718-3.120a2.500 2.500 0 1 1 0-3.256l6.718-3.120A2.500 2.500 0 0 1 11 2.500"/></svg><span id="t22">2</span></span></div>
<div class="lonely"><span class="sbadge" style="left:5.40px;width:36.80px;top:2.5px;margin-top:0;"><svg class="bi" width="14" height="14" viewBox="0 0 16 16" fill="currentColor" style="overflow:visible;"><path d="M11 2.500a2.500 2.500 0 1 1 .603 1.628l-6.718 3.120a2.500 2.500 0 0 1 0 1.504l6.718 3.120a2.500 2.500 0 1 1-.488.876l-6.718-3.120a2.500 2.500 0 1 1 0-3.256l6.718-3.120A2.500 2.500 0 0 1 11 2.500"/></svg><span id="t23">2</span></span></div>
<div class="row note d0 two"><svg class="bi" width="16" height="16" viewBox="0 0 16 16" fill="#0d6efd" style="overflow:visible;"><path d="M5.5 7a.5.5 0 0 0 0 1h5a.5.5 0 0 0 0-1zM5 9.500a.5.5 0 0 1 .5-.5h5a.5.5 0 0 1 0 1h-5a.5.5 0 0 1-.5-.5m0 2a.5.5 0 0 1 .5-.5h2a.5.5 0 0 1 0 1h-2a.5.5 0 0 1-.5-.5"/><path d="M9.500 0H4a2 2 0 0 0-2 2v12a2 2 0 0 0 2 2h8a2 2 0 0 0 2-2V4.500zm0 1v2A1.500 1.500 0 0 0 11 4.500h2V14a1 1 0 0 1-1 1H4a1 1 0 0 1-1-1V2a1 1 0 0 1 1-1z"/></svg><span class="nm"><span id="t24" style="display:inline-block;transform:scaleX(1.0204);transform-origin:0 50%;margin-right:3.01px;">Writeable node to be</span><br><span id="t25" style="display:inline-block;transform:scaleX(0.9583);transform-origin:0 50%;margin-right:-2.04px;">shared</span></span><span class="sbadge" style="left:241.10px;width:37.40px;"><svg class="bi" width="14" height="14" viewBox="0 0 16 16" fill="currentColor" style="overflow:visible;"><path d="M11 2.500a2.500 2.500 0 1 1 .603 1.628l-6.718 3.120a2.500 2.500 0 0 1 0 1.504l6.718 3.120a2.500 2.500 0 1 1-.488.876l-6.718-3.120a2.500 2.500 0 1 1 0-3.256l6.718-3.120A2.500 2.500 0 0 1 11 2.500"/></svg><span id="t26">2</span></span></div>
<div class="row folder d0"><svg class="bi" width="16" height="16" viewBox="0 0 16 16" fill="currentColor" style="overflow:visible;"><path d="M1 3.5A1.5 1.5 0 0 1 2.5 2h2.764c.958 0 1.76.56 2.311 1.184C7.985 3.648 8.48 4 9 4h4.5A1.5 1.5 0 0 1 15 5.5v.64c.57.265.94.876.856 1.546l-.64 5.124A2.5 2.5 0 0 1 12.733 15H3.266a2.5 2.5 0 0 1-2.481-2.19l-.64-5.124A1.5 1.5 0 0 1 1 6.14zM2 6h12v-.5a.5.5 0 0 0-.5-.5H9c-.964 0-1.71-.629-2.174-1.154C6.374 3.334 5.82 3 5.264 3H2.5a.5.5 0 0 0-.5.5zm-.367 1a.5.5 0 0 0-.496.562l.64 5.124A1.5 1.5 0 0 0 3.266 14h9.468a1.5 1.5 0 0 0 1.489-1.314l.64-5.124A.5.5 0 0 0 14.367 7z"/></svg><span class="nm"><span id="t27" style="display:inline-block;transform:scaleX(0.9563);transform-origin:0 50%;margin-right:-7.97px;">TreeNotes Development</span></span><span class="caret"><svg class="bi" width="16" height="16" viewBox="0 0 16 16" fill="currentColor" style="overflow:visible;"><path d="M7.247 11.140 2.451 5.658C1.885 5.013 2.345 4 3.204 4h9.592a1 1 0 0 1 .753 1.659l-4.796 5.480a1 1 0 0 1-1.506 0z"/></svg></span></div>
<div class="kids">
<div class="row note d1 "><svg class="bi" width="16" height="16" viewBox="0 0 16 16" fill="#0d6efd" style="overflow:visible;"><path d="M5.5 7a.5.5 0 0 0 0 1h5a.5.5 0 0 0 0-1zM5 9.500a.5.5 0 0 1 .5-.5h5a.5.5 0 0 1 0 1h-5a.5.5 0 0 1-.5-.5m0 2a.5.5 0 0 1 .5-.5h2a.5.5 0 0 1 0 1h-2a.5.5 0 0 1-.5-.5"/><path d="M9.500 0H4a2 2 0 0 0-2 2v12a2 2 0 0 0 2 2h8a2 2 0 0 0 2-2V4.500zm0 1v2A1.500 1.500 0 0 0 11 4.500h2V14a1 1 0 0 1-1 1H4a1 1 0 0 1-1-1V2a1 1 0 0 1 1-1z"/></svg><span class="nm"><span id="t28" style="display:inline-block;transform:scaleX(0.9873);transform-origin:0 50%;margin-right:-2.00px;">Commands for Cursor</span></span></div>
</div>
<div class="swm"><span id="t29" style="display:inline-block;transform:scaleX(0.9512);transform-origin:0 50%;margin-right:-5.99px;">SHARED WITH ME</span></div>
<div class="row note d0 "><svg class="bi" width="16" height="16" viewBox="0 0 16 16" fill="#fd7e14" style="overflow:visible;"><path d="M5.5 7a.5.5 0 0 0 0 1h5a.5.5 0 0 0 0-1zM5 9.500a.5.5 0 0 1 .5-.5h5a.5.5 0 0 1 0 1h-5a.5.5 0 0 1-.5-.5m0 2a.5.5 0 0 1 .5-.5h2a.5.5 0 0 1 0 1h-2a.5.5 0 0 1-.5-.5"/><path d="M9.500 0H4a2 2 0 0 0-2 2v12a2 2 0 0 0 2 2h8a2 2 0 0 0 2-2V4.500zm0 1v2A1.500 1.500 0 0 0 11 4.500h2V14a1 1 0 0 1-1 1H4a1 1 0 0 1-1-1V2a1 1 0 0 1 1-1z"/></svg><span class="nm"><span id="t30" style="display:inline-block;transform:scaleX(1.0210);transform-origin:0 50%;margin-right:3.00px;">A node from jomep2</span></span><span class="lock" style="left:195.00px"><svg class="bi" width="14" height="14" viewBox="0 0 16 16" fill="#ffc107" style="overflow:visible;"><g transform="translate(0.343 0.000)"><path d="M8 1a2 2 0 0 1 2 2v4H6V3a2 2 0 0 1 2-2m3 6V3a3 3 0 0 0-6 0v4a2 2 0 0 0-2 2v5a2 2 0 0 0 2 2h6a2 2 0 0 0 2-2V9a2 2 0 0 0-2-2"/></g></svg></span></div>
      </div>
    </div>
    <div class="split"><i></i></div>
    <div class="main">
      <div class="toolbar"><span class="grp" style="left:0;width:42px"><span class="tbtn "><svg class="bi" width="16" height="16" viewBox="0 0 16 16" fill="currentColor" style="overflow:visible;"><path d="M2 2a1 1 0 0 0-1 1v10a1 1 0 0 0 1 1h12a1 1 0 0 0 1-1V3a1 1 0 0 0-1-1zm12-1a2 2 0 0 1 2 2v10a2 2 0 0 1-2 2H2a2 2 0 0 1-2-2V3a2 2 0 0 1 2-2z"/><path d="M13 4a1 1 0 0 0-1-1h-2a1 1 0 0 0-1 1v8a1 1 0 0 0 1 1h2a1 1 0 0 0 1-1z"/></svg></span></span><span class="grp" style="left:58px;width:101px"><span class="tbtn w36 sm"><b><span id="t31" style="display:inline-block;transform:scaleX(0.9500);transform-origin:0 50%;margin-right:-0.52px;">B</span></b></span><span class="tbtn w29 sm"><i><span id="t32">I</span></i></span><span class="tbtn w36 sm"><u><span id="t33">U</span></u></span></span><span class="grp" style="left:175px;width:125px"><span class="tbtn w46 sm"><span id="t34" style="display:inline-block;transform:scaleX(1.0706);transform-origin:0 50%;margin-right:1.31px;">H1</span></span><span class="tbtn w45 sm"><span id="t35" style="display:inline-block;transform:scaleX(1.1000);transform-origin:0 50%;margin-right:1.85px;">H2</span></span><span class="tbtn w34 sm"><span id="t36">p</span></span></span><span class="grp" style="left:316px;width:130px"><span class="tbtn w42"><svg class="bi" width="16" height="16" viewBox="0 0 16 16" fill="currentColor" style="overflow:visible;"><path d="M15.825.120a.5.5 0 0 1 .132.584c-1.530 3.430-4.743 8.170-7.095 10.640a6.100 6.100 0 0 1-2.373 1.534c-.018.227-.060.538-.160.868-.201.659-.667 1.479-1.708 1.740a8.100 8.100 0 0 1-3.078.132 4 4 0 0 1-.562-.135 1.400 1.400 0 0 1-.466-.247.700.700 0 0 1-.204-.288.620.620 0 0 1 .004-.443c.095-.245.316-.380.461-.452.394-.197.625-.453.867-.826.095-.144.184-.297.287-.472l.117-.198c.151-.255.326-.540.546-.848.528-.739 1.201-.925 1.746-.896q.190.012.348.048c.062-.172.142-.380.238-.608.261-.619.658-1.419 1.187-2.069 2.176-2.670 6.180-6.206 9.117-8.104a.5.5 0 0 1 .596.040M4.705 11.912a1.200 1.200 0 0 0-.419-.100c-.246-.013-.573.050-.879.479-.197.275-.355.532-.5.777l-.105.177c-.106.181-.213.362-.320.528a3.400 3.400 0 0 1-.760.861c.690.112 1.736.111 2.657-.120.559-.139.843-.569.993-1.060a3 3 0 0 0 .126-.750zm1.440.026c.120-.040.277-.100.458-.183a5.100 5.100 0 0 0 1.535-1.100c1.900-1.996 4.412-5.570 6.052-8.631-2.590 1.927-5.566 4.660-7.302 6.792-.442.543-.795 1.243-1.042 1.826-.121.288-.214.540-.275.720v.001l.575.575z"/></svg></span><span class="tbtn w41"><svg class="bi" width="16" height="16" viewBox="0 0 16 16" fill="currentColor" style="overflow:visible;"><path d="M4.715 6.542 3.343 7.914a3 3 0 1 0 4.243 4.243l1.828-1.829A3 3 0 0 0 8.586 5.500L8 6.086a1 1 0 0 0-.154.199 2 2 0 0 1 .861 3.337L6.880 11.450a2 2 0 1 1-2.830-2.830l.793-.792a4 4 0 0 1-.128-1.287z"/><path d="M6.586 4.672A3 3 0 0 0 7.414 9.500l.775-.776a2 2 0 0 1-.896-3.346L9.120 3.550a2 2 0 1 1 2.830 2.830l-.793.792c.112.420.155.855.128 1.287l1.372-1.372a3 3 0 1 0-4.243-4.243z"/></svg></span><span class="tbtn w47"><span class=emo>😊</span></span></span><span class="grp" style="left:462px;width:42px"><span class="tbtn "><svg class="bi" width="16" height="16" viewBox="0 0 16 16" fill="currentColor" style="overflow:visible;"><path d="M10.478 1.647a.5.5 0 1 0-.956-.294l-4 13a.5.5 0 0 0 .956.294zM4.854 4.146a.5.5 0 0 1 0 .708L1.707 8l3.147 3.146a.5.5 0 0 1-.708.708l-3.500-3.500a.5.5 0 0 1 0-.708l3.500-3.500a.5.5 0 0 1 .708 0m6.292 0a.5.5 0 0 0 0 .708L14.293 8l-3.147 3.146a.5.5 0 0 0 .708.708l3.500-3.500a.5.5 0 0 0 0-.708l-3.500-3.500a.5.5 0 0 0-.708 0"/></svg></span></span><span class="grp" style="left:520px;width:42px"><span class="tbtn "><svg class="bi" width="16" height="16" viewBox="0 0 16 16" fill="currentColor" style="overflow:visible;"><g transform="translate(0.500 0.000)"><path d="M4.500 3a2.500 2.500 0 0 1 5 0v9a1.500 1.500 0 0 1-3 0V5a.5.5 0 0 1 1 0v7a.5.5 0 0 0 1 0V3a1.500 1.500 0 1 0-3 0v9a2.500 2.500 0 0 0 5 0V5a.5.5 0 0 1 1 0v7a3.500 3.500 0 1 1-7 0z"/></g></svg></span></span><span class="grp prim" style="left:578px;width:104px"><span class="tbtn "><svg class="bi" width="16" height="16" viewBox="0 0 16 16" fill="currentColor" style="overflow:visible;margin-left:1px"><path d="M13.500 1a1.500 1.500 0 1 0 0 3 1.500 1.500 0 0 0 0-3M11 2.500a2.500 2.500 0 1 1 .603 1.628l-6.718 3.120a2.500 2.500 0 0 1 0 1.504l6.718 3.120a2.500 2.500 0 1 1-.488.876l-6.718-3.120a2.500 2.500 0 1 1 0-3.256l6.718-3.120A2.500 2.500 0 0 1 11 2.500m-8.500 4a1.500 1.500 0 1 0 0 3 1.500 1.500 0 0 0 0-3m11 5.500a1.500 1.500 0 1 0 0 3 1.500 1.500 0 0 0 0-3"/></svg><span style='margin-left:5px'><span id="t37" style="display:inline-block;transform:scaleX(0.9344);transform-origin:0 50%;margin-right:-4.02px;">2 shares</span></span></span></span><span class="grp" style="left:698px;width:42px"><span class="tbtn "><svg class="bi" width="16" height="16" viewBox="0 0 16 16" fill="currentColor" style="overflow:visible;"><path d="M2.500 8a.5.5 0 1 0 0-1 .5.5 0 0 0 0 1"/><path d="M5 1a2 2 0 0 0-2 2v2H2a2 2 0 0 0-2 2v3a2 2 0 0 0 2 2h1v1a2 2 0 0 0 2 2h6a2 2 0 0 0 2-2v-1h1a2 2 0 0 0 2-2V7a2 2 0 0 0-2-2h-1V3a2 2 0 0 0-2-2zM4 3a1 1 0 0 1 1-1h6a1 1 0 0 1 1 1v2H4zm1 5a2 2 0 0 0-2 2v1H2a1 1 0 0 1-1-1V7a1 1 0 0 1 1-1h12a1 1 0 0 1 1 1v3a1 1 0 0 1-1 1h-1v-1a2 2 0 0 0-2-2zm7 2v3a1 1 0 0 1-1 1H5a1 1 0 0 1-1-1v-3a1 1 0 0 1 1-1h6a1 1 0 0 1 1 1"/></svg></span></span></div>
      <div class="editor"><p><span id="t43">Readonly hopefully!</span></p></div>
      <span class="save"><span id="t44" style="display:inline-block;transform:scaleX(0.9167);transform-origin:0 50%;margin-right:-3.04px;">Save</span></span>
      <span class="unmod"><span id="t45" style="display:inline-block;transform:scaleX(1.0688);transform-origin:0 50%;margin-right:5.56px;">Unmodified</span></span>
    </div>
  </div>
</div>
<div class="backdrop"></div>
<div class="modal">
  <div class="mh"><h5><span id="t46" style="display:inline-block;transform:scaleX(0.9907);transform-origin:0 50%;margin-right:-1.00px;">Share Node</span></h5><span class="close"><svg class="bi" width="16" height="16" viewBox="0 0 16 16" fill="#000" style="overflow:visible;"><path d="M.293.293a1 1 0 0 1 1.414 0L8 6.586 14.293.293a1 1 0 1 1 1.414 1.414L9.414 8l6.293 6.293a1 1 0 0 1-1.414 1.414L8 9.414l-6.293 6.293a1 1 0 0 1-1.414-1.414L6.586 8 .293 1.707a1 1 0 0 1 0-1.414z"/></svg></span></div>
  <div class="mb">
    <div class="tabs"><span class="tab act"><span id="t47" style="display:inline-block;transform:scaleX(0.9596);transform-origin:0 50%;margin-right:-7.98px;">Share with TreeNotes users</span></span><span class="tab"><span id="t48" style="display:inline-block;transform:scaleX(0.9916);transform-origin:0 50%;margin-right:-0.99px;">Anonymous Link</span></span></div>
    <label><span id="t49" style="display:inline-block;transform:scaleX(0.9726);transform-origin:0 50%;margin-right:-2.02px;">Username</span></label>
    <div class="ig"><span class="inp"><span id="t50" style="display:inline-block;transform:scaleX(0.9735);transform-origin:0 50%;margin-right:-3.02px;">Enter username</span></span><span class="sel"><span id="t51" style="display:inline-block;transform:scaleX(0.9722);transform-origin:0 50%;margin-right:-0.96px;">View</span><svg width="16" height="12" viewBox="0 0 16 16" style="position:absolute;right:11px;top:12px"><path fill="none" stroke="#343a40" stroke-linecap="round" stroke-linejoin="round" stroke-width="2" d="m2 5 6 6 6-6"/></svg></span><span class="add"><svg class="bi" width="16" height="16" viewBox="0 0 16 16" fill="currentColor" style="overflow:visible;stroke:#fff;stroke-width:.5"><path d="M8 15A7 7 0 1 1 8 1a7 7 0 0 1 0 14m0 1A8 8 0 1 0 8 0a8 8 0 0 0 0 16"/><path d="M8 4a.5.5 0 0 1 .5.5v3h3a.5.5 0 0 1 0 1h-3v3a.5.5 0 0 1-1 0v-3h-3a.5.5 0 0 1 0-1h3v-3A.5.5 0 0 1 8 4"/></svg><span style="margin-left:4px"><span id="t52" style="display:inline-block;transform:scaleX(0.8750);transform-origin:0 50%;margin-right:-3.56px;">Add</span></span></span></div>
    <table><thead><tr><th style="width:416px"><span id="t53" style="display:inline-block;transform:scaleX(0.9615);transform-origin:0 50%;margin-right:-2.98px;">Username</span></th><th style="width:100px"><span id="t54" style="display:inline-block;transform:scaleX(0.9535);transform-origin:0 50%;margin-right:-4.01px;">Permission</span></th><th style="width:150px"><span id="t55" style="display:inline-block;transform:scaleX(0.9787);transform-origin:0 50%;margin-right:-1.99px;">Shared Date</span></th><th style="width:100px"><span id="t56" style="display:inline-block;transform:scaleX(0.9492);transform-origin:0 50%;margin-right:-2.98px;">Actions</span></th></tr></thead>
    <tbody><tr><td><span id="t57">jomep</span></td><td><span id="t58" style="display:inline-block;transform:scaleX(0.9429);transform-origin:0 50%;margin-right:-1.97px;">View</span></td><td><span id="t59" style="display:inline-block;transform:scaleX(0.9672);transform-origin:0 50%;margin-right:-4.05px;">15.11.2025 15:30</span></td><td><span class="rm"><svg class="bi" width="14" height="14" viewBox="0 0 16 16" fill="currentColor" style="overflow:visible;"><path d="M5.5 5.5A.5.5 0 0 1 6 6v6a.5.5 0 0 1-1 0V6a.5.5 0 0 1 .5-.5m2.5 0a.5.5 0 0 1 .5.5v6a.5.5 0 0 1-1 0V6a.5.5 0 0 1 .5-.5m3 .5a.5.5 0 0 0-1 0v6a.5.5 0 0 0 1 0z"/><path d="M14.5 3a1 1 0 0 1-1 1H13v9a2 2 0 0 1-2 2H5a2 2 0 0 1-2-2V4h-.5a1 1 0 0 1-1-1V2a1 1 0 0 1 1-1H6a1 1 0 0 1 1-1h2a1 1 0 0 1 1 1h3.5a1 1 0 0 1 1 1zM4.118 4 4 4.059V13a1 1 0 0 0 1 1h6a1 1 0 0 0 1-1V4.059L11.882 4zM2.5 3h11V2h-11z"/></svg><span style="margin-left:3.5px"><span id="t60" style="display:inline-block;transform:scaleX(0.9608);transform-origin:0 50%;margin-right:-2.04px;">Remove</span></span></span></td></tr><tr><td><span id="t61">joerg2</span></td><td><span id="t62" style="display:inline-block;transform:scaleX(0.9429);transform-origin:0 50%;margin-right:-1.97px;">View</span></td><td><span id="t63" style="display:inline-block;transform:scaleX(0.9672);transform-origin:0 50%;margin-right:-4.05px;">15.11.2025 15:30</span></td><td><span class="rm"><svg class="bi" width="14" height="14" viewBox="0 0 16 16" fill="currentColor" style="overflow:visible;"><path d="M5.5 5.5A.5.5 0 0 1 6 6v6a.5.5 0 0 1-1 0V6a.5.5 0 0 1 .5-.5m2.5 0a.5.5 0 0 1 .5.5v6a.5.5 0 0 1-1 0V6a.5.5 0 0 1 .5-.5m3 .5a.5.5 0 0 0-1 0v6a.5.5 0 0 0 1 0z"/><path d="M14.5 3a1 1 0 0 1-1 1H13v9a2 2 0 0 1-2 2H5a2 2 0 0 1-2-2V4h-.5a1 1 0 0 1-1-1V2a1 1 0 0 1 1-1H6a1 1 0 0 1 1-1h2a1 1 0 0 1 1 1h3.5a1 1 0 0 1 1 1zM4.118 4 4 4.059V13a1 1 0 0 0 1 1h6a1 1 0 0 0 1-1V4.059L11.882 4zM2.5 3h11V2h-11z"/></svg><span style="margin-left:3.5px"><span id="t64" style="display:inline-block;transform:scaleX(0.9608);transform-origin:0 50%;margin-right:-2.04px;">Remove</span></span></span></td></tr></tbody></table>
  </div>
  <div class="mf"><span class="closeb"><span id="t65" style="display:inline-block;transform:scaleX(0.9500);transform-origin:0 50%;margin-right:-2.05px;">Close</span></span></div>
</div>
</body></html>
